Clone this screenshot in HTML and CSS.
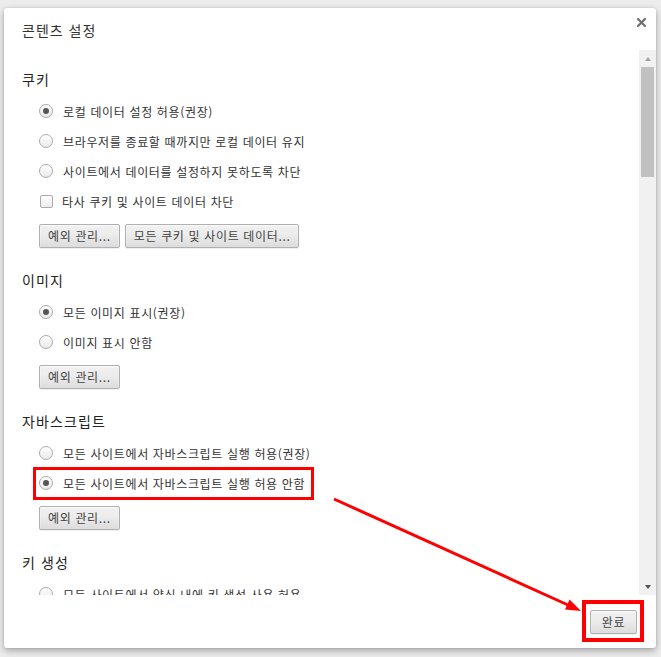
FILE: index.html
```html
<!DOCTYPE html>
<html lang="ko">
<head>
<meta charset="utf-8">
<title>콘텐츠 설정</title>
<link rel="stylesheet" href="styles.css">
</head>
<body>
<div class="dialog">
  <div class="dlg-head">
    <h1 class="title">콘텐츠 설정</h1>
    <button class="close" aria-label="닫기">
      <svg width="9" height="9" viewBox="0 0 9 9"><path d="M1 1 L8 8 M8 1 L1 8" stroke="#6f6f6f" stroke-width="2.2" stroke-linecap="square"/></svg>
    </button>
  </div>
  <div class="dlg-body">
    <div class="scroll-content">
      <section class="section">
        <h3 class="section-title">쿠키</h3>
        <div class="options">
          <label class="option"><span class="radio checked"></span>로컬 데이터 설정 허용(권장)</label>
          <label class="option"><span class="radio"></span>브라우저를 종료할 때까지만 로컬 데이터 유지</label>
          <label class="option"><span class="radio"></span>사이트에서 데이터를 설정하지 못하도록 차단</label>
          <label class="option"><span class="checkbox"></span>타사 쿠키 및 사이트 데이터 차단</label>
        </div>
        <div class="buttons">
          <button class="btn">예외 관리...</button>
          <button class="btn">모든 쿠키 및 사이트 데이터...</button>
        </div>
      </section>
      <section class="section">
        <h3 class="section-title">이미지</h3>
        <div class="options">
          <label class="option"><span class="radio checked"></span>모든 이미지 표시(권장)</label>
          <label class="option"><span class="radio"></span>이미지 표시 안함</label>
        </div>
        <div class="buttons">
          <button class="btn">예외 관리...</button>
        </div>
      </section>
      <section class="section">
        <h3 class="section-title">자바스크립트</h3>
        <div class="options">
          <label class="option"><span class="radio"></span>모든 사이트에서 자바스크립트 실행 허용(권장)</label>
          <label class="option"><span class="radio checked"></span>모든 사이트에서 자바스크립트 실행 허용 안함</label>
        </div>
        <div class="buttons">
          <button class="btn">예외 관리...</button>
        </div>
      </section>
      <section class="section">
        <h3 class="section-title">키 생성</h3>
        <div class="options">
          <label class="option"><span class="radio"></span>모든 사이트에서 양식 내에 키 생성 사용 허용</label>
        </div>
      </section>
    </div>
    <div class="scrollbar">
      <div class="sb-arrow"><span class="tri up"></span></div>
      <div class="sb-track"><div class="sb-thumb"></div></div>
      <div class="sb-arrow"><span class="tri down"></span></div>
    </div>
  </div>
  <div class="dlg-foot">
    <button class="btn btn-done">완료</button>
  </div>
</div>
<svg class="annotations" width="661" height="657" viewBox="0 0 661 657">
  <rect x="34.5" y="468.5" width="278" height="30" fill="none" stroke="#ff0000" stroke-width="3"/>
  <rect x="584" y="602" width="58" height="38" fill="none" stroke="#ff0000" stroke-width="4"/>
  <line x1="334" y1="499" x2="568" y2="605" stroke="#ff0000" stroke-width="3"/>
  <polygon points="581,611 565,609.6 569.6,599.6" fill="#ff0000"/>
</svg>
</body>
</html>
```

FILE: styles.css
```css
html, body {
  margin: 0;
  padding: 0;
}

body {
  width: 661px;
  height: 657px;
  box-sizing: border-box;
  padding: 8px 5px 9px 4px;
  background: #ececec;
  font-family: "Noto Sans CJK KR", "Noto Sans", sans-serif;
  color: #333;
  overflow: hidden;
  position: relative;
}

.dialog {
  width: 652px;
  height: 640px;
  background: #fff;
  border-radius: 3px;
  box-shadow: 0 3px 7px rgba(0, 0, 0, 0.28), 0 0 3px rgba(0, 0, 0, 0.12);
  display: flex;
  flex-direction: column;
  overflow: hidden;
}

.dlg-head {
  height: 42px;
  flex: none;
  display: flex;
  justify-content: space-between;
  align-items: flex-start;
  padding: 0 10px 0 18px;
}

.title {
  margin: 12px 0 0;
  font-size: 14px;
  line-height: 20px;
  letter-spacing: 1px;
  font-weight: normal;
  color: #333;
}

.close {
  margin-top: 10px;
  padding: 0;
  border: 0;
  background: none;
  width: 9px;
  height: 9px;
  display: flex;
}

.dlg-body {
  height: 545px;
  flex: none;
  display: flex;
}

.scroll-content {
  flex: 1;
  overflow: hidden;
  padding-left: 18px;
}

.section {
  margin-top: 22px;
}

.section:first-child {
  margin-top: 19px;
}

.section-title {
  margin: 0 0 7px;
  font-size: 14px;
  line-height: 20px;
  letter-spacing: 1.1px;
  font-weight: normal;
  color: #222;
}

.options {
  padding-left: 17px;
}

.option {
  display: flex;
  align-items: center;
  gap: 10px;
  height: 30px;
  font-size: 12px;
  letter-spacing: 0.65px;
  color: #333;
}

.radio {
  width: 14px;
  height: 14px;
  box-sizing: border-box;
  border-radius: 50%;
  border: 1px solid #ababab;
  background: linear-gradient(#ffffff, #e9e9e9);
  box-shadow: inset 0 1px 1px rgba(255, 255, 255, 0.9);
  display: flex;
  align-items: center;
  justify-content: center;
  flex: none;
}

.radio.checked::after {
  content: "";
  width: 6px;
  height: 6px;
  border-radius: 50%;
  background: #555;
}

.checkbox {
  width: 13px;
  height: 13px;
  box-sizing: border-box;
  margin-left: 1px;
  margin-right: -1px;
  border: 1px solid #ababab;
  border-radius: 2px;
  background: linear-gradient(#ffffff, #ececec);
  flex: none;
}

.buttons {
  display: flex;
  gap: 5px;
  margin-top: 8px;
  padding-left: 17px;
}

.btn {
  height: 24px;
  box-sizing: border-box;
  padding: 0 8px;
  border: 1px solid #b0b0b0;
  border-radius: 2px;
  background: linear-gradient(#f0f0f0, #ededed 40%, #dcdcdc);
  box-shadow: 0 1px 0 rgba(0, 0, 0, 0.06), inset 0 1px 2px rgba(255, 255, 255, 0.8);
  font-family: inherit;
  font-size: 12px;
  line-height: 20px;
  letter-spacing: 0.65px;
  color: #444;
}

.btn-done {
  width: 47px;
  padding: 0;
}

.scrollbar {
  width: 17px;
  flex: none;
  background: #f1f1f1;
  display: flex;
  flex-direction: column;
}

.sb-arrow {
  height: 17px;
  flex: none;
  display: flex;
  align-items: center;
  justify-content: center;
}

.tri {
  width: 0;
  height: 0;
  border-left: 3.5px solid transparent;
  border-right: 3.5px solid transparent;
}

.tri.up {
  border-bottom: 4px solid #a3a3a3;
}

.tri.down {
  border-top: 4px solid #505050;
}

.sb-track {
  flex: 1;
  padding: 0 2px;
}

.sb-thumb {
  height: 110px;
  background: #c1c1c1;
}

.dlg-foot {
  flex: 1;
  display: flex;
  justify-content: flex-end;
  align-items: flex-start;
  padding: 15px 19px 0 0;
}

.annotations {
  position: absolute;
  top: 0;
  left: 0;
  pointer-events: none;
}
```
